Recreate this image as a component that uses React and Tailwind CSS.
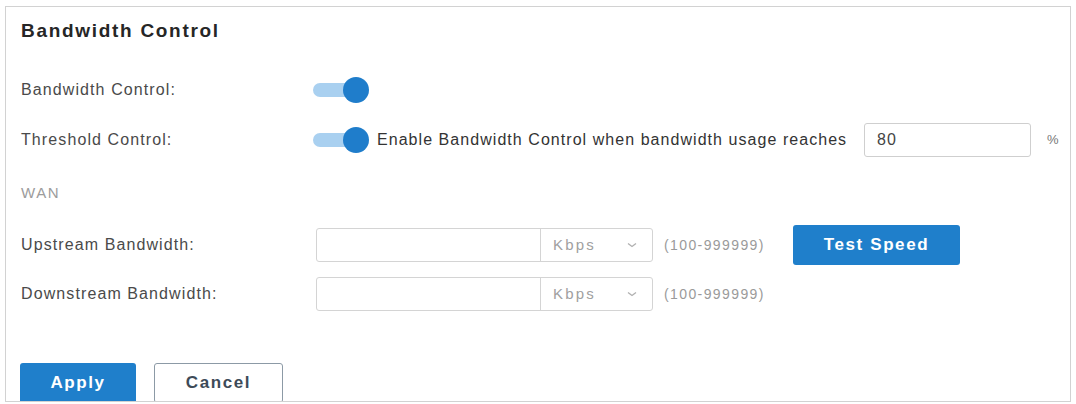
import React from 'react';

function Toggle() {
  return (
    <div className="relative h-[26px] w-[58px] shrink-0">
      <div className="absolute left-0 top-[6px] h-[14px] w-[40px] rounded-full bg-[#a9d0f0]" />
      <div className="absolute left-[30px] top-0 h-[26px] w-[26px] rounded-full bg-[#1f7dcb]" />
    </div>
  );
}

function Label({ children }) {
  return (
    <div className="w-[292px] shrink-0 text-[16px] tracking-[1.1px] text-[#4a4a4a]">{children}</div>
  );
}

function RateInput() {
  return (
    <div className="ml-[3px] flex h-[34px] w-[337px] rounded-[3px] border border-[#d4d4d4] bg-white">
      <div className="w-[224px] border-r border-[#d4d4d4]" />
      <div className="flex flex-1 items-center justify-between pl-[12px] pr-[14px] text-[15px] tracking-[2.2px] text-[#a0a0a0]">
        <span>Kbps</span>
        <svg width="12" height="8" viewBox="0 0 12 8" fill="none">
          <path d="M2 2.5 L6 5.5 L10 2.5" stroke="#b0b0b0" strokeWidth="1.3" />
        </svg>
      </div>
    </div>
  );
}

function Range() {
  return (
    <span className="ml-[11px] w-[104px] whitespace-nowrap text-[14px] tracking-[1.4px] text-[#9a9a9a]">(100-999999)</span>
  );
}

export default function App() {
  return (
    <div className="h-[404px] w-[1076px] overflow-hidden bg-white pl-[5px] pt-[6px]" style={{ fontFamily: '"Liberation Sans", Arial, sans-serif' }}>
      <div className="flex h-[396px] w-[1066px] flex-col overflow-hidden border border-[#d2d2d2] pl-[15px]">
        {/* Title */}
        <div className="flex h-[48px] shrink-0 items-center text-[19px] font-bold tracking-[1.7px] text-[#262626]">
          Bandwidth Control
        </div>

        {/* Bandwidth control */}
        <div className="mt-[15px] flex h-[40px] shrink-0 items-center">
          <Label>Bandwidth Control:</Label>
          <Toggle />
        </div>

        {/* Threshold */}
        <div className="mt-[10px] flex h-[40px] shrink-0 items-center">
          <Label>Threshold Control:</Label>
          <Toggle />
          <span className="ml-[6px] w-[472px] whitespace-nowrap text-[16px] tracking-[1.05px] text-[#333]">
            Enable Bandwidth Control when bandwidth usage reaches
          </span>
          <div className="ml-[15px] flex h-[34px] w-[167px] items-center rounded-[3px] border border-[#cfcfcf] pl-[12px] text-[16px] tracking-[1px] text-[#444]">
            80
          </div>
          <span className="ml-[16px] text-[13px] text-[#777]">%</span>
        </div>

        {/* WAN */}
        <div className="mt-[18px] flex h-[30px] shrink-0 items-center text-[15px] tracking-[1.6px] text-[#9c9c9c]">WAN</div>

        {/* Upstream */}
        <div className="mt-[17px] flex h-[40px] shrink-0 items-center">
          <Label>Upstream Bandwidth:</Label>
          <RateInput />
          <Range />
          <button className="ml-[25px] h-[40px] w-[167px] rounded-[3px] bg-[#1f7fcb] text-[17px] font-bold tracking-[1.6px] text-white">
            Test Speed
          </button>
        </div>

        {/* Downstream */}
        <div className="mt-[9px] flex h-[40px] shrink-0 items-center">
          <Label>Downstream Bandwidth:</Label>
          <RateInput />
          <Range />
        </div>

        {/* Actions */}
        <div className="-ml-[1px] mt-[49px] flex shrink-0 gap-[18px]">
          <button className="h-[40px] w-[116px] rounded-[3px] bg-[#1f7fcb] text-[17px] font-bold tracking-[1.6px] text-white">
            Apply
          </button>
          <button className="h-[40px] w-[129px] rounded-[3px] border border-[#8c9aa6] bg-white text-[17px] font-bold tracking-[1.6px] text-[#3d4b58]">
            Cancel
          </button>
        </div>
      </div>
    </div>
  );
}
